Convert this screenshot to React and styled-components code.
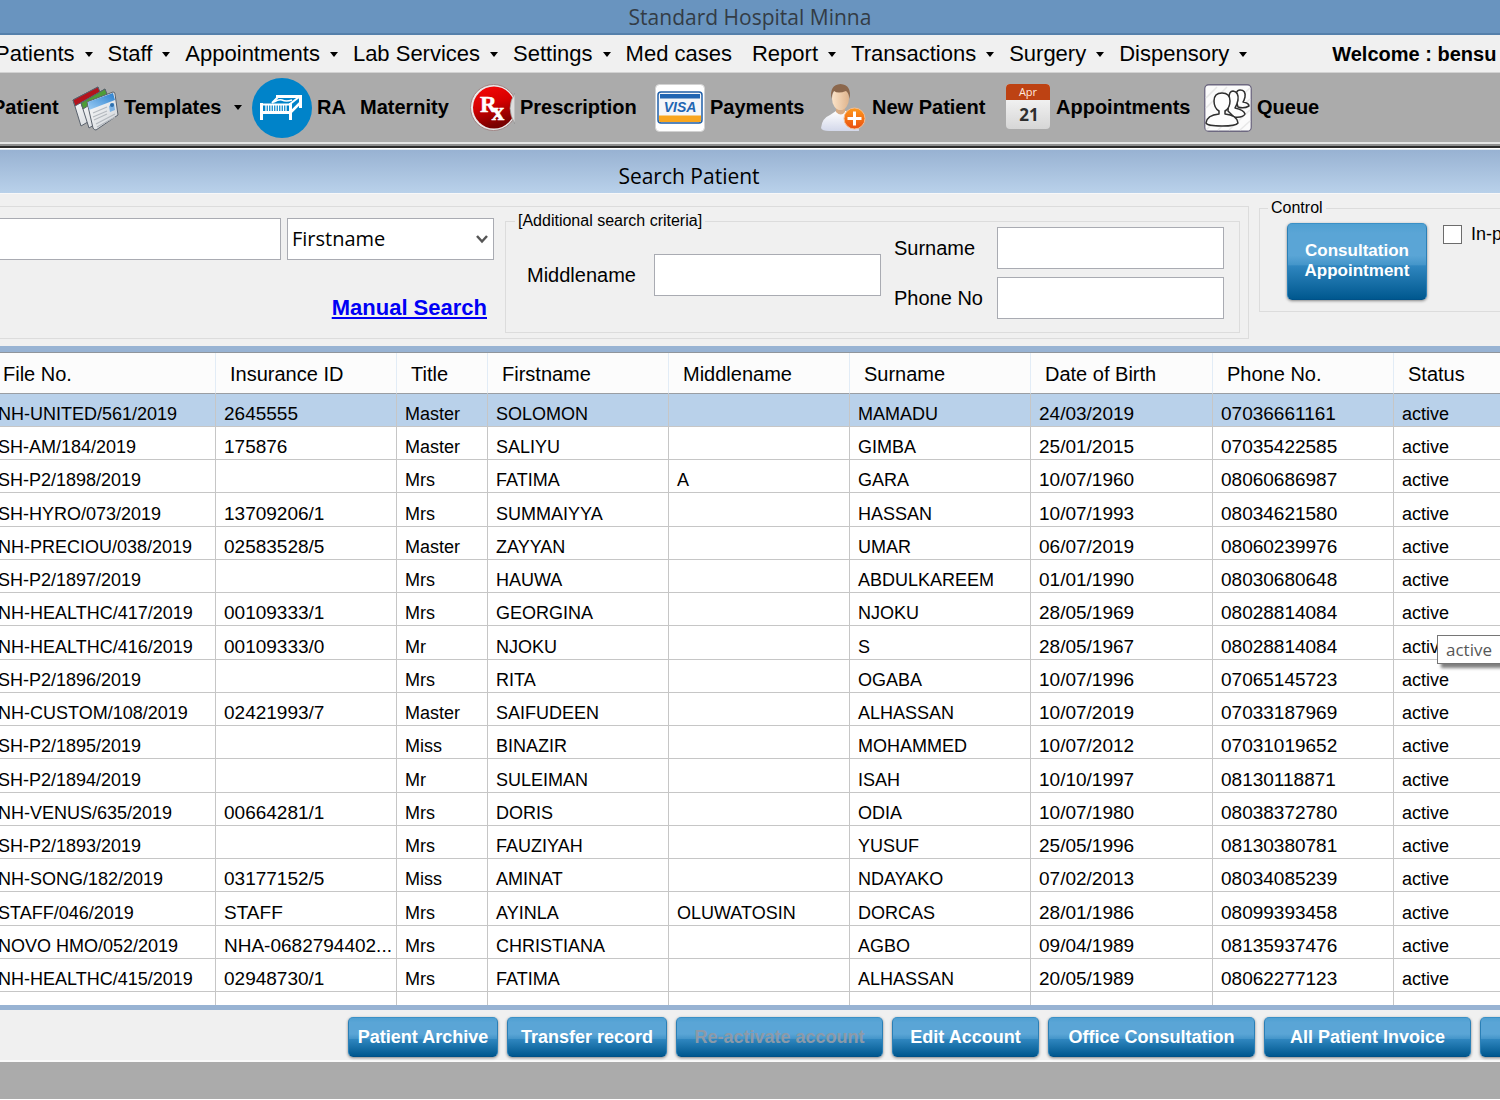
import React from "react";
import styled, { createGlobalStyle, css } from "styled-components";

const GlobalStyle = createGlobalStyle`
  *, *::before, *::after { box-sizing: border-box; }
  body {
    margin: 0;
    overflow: hidden;
    background: #fff;
    color: #000;
    font-family: "Liberation Sans", Arial, sans-serif;
    font-size: 20px;
  }
  button, input, select { font: inherit; color: inherit; margin: 0; }
`;

const humanist = `"Open Sans", "Noto Sans", sans-serif`;

const Window = styled.div`
  display: flex;
  flex-direction: column;
  overflow: hidden;
  white-space: nowrap;
`;

const TitleBar = styled.header`
  height: 35px;
  border-bottom: 2px solid #5580ab;
  background: #6994bf;
  color: #333c46;
  font: 21px/34px ${humanist};
  text-align: center;
`;

const MenuBar = styled.nav`
  display: flex;
  align-items: center;
  gap: 15px;
  height: 38px;
  margin-left: -5px;
  background: #f0f0f0;
  border-bottom: 1px solid #d2d2d2;
`;

const MenuButton = styled.button`
  display: flex;
  align-items: center;
  gap: 10px;
  flex: none;
  border: 0;
  padding: 1px ${(p) => (p.$plain ? 5 : 0)}px 0 0;
  background: none;
  font-size: 22px;
  line-height: 36px;
`;

const Caret = styled.span`
  flex: none;
  border: 4px solid transparent;
  border-top: 5px solid #000;
  border-bottom: 0;
`;

const Welcome = styled.span`
  margin-left: 70px;
  padding-top: 2px;
  font-weight: bold;
  font-size: 20px;
`;

const ToolBar = styled.div`
  display: flex;
  align-items: center;
  height: 69px;
  margin-left: -8px;
  background: #ababab;
`;

const ToolButton = styled.button`
  display: flex;
  align-items: center;
  gap: 5px;
  flex: none;
  width: ${(p) => p.$width}px;
  border: 0;
  padding: 0;
  background: none;
  font-weight: bold;
  font-size: 20px;
  line-height: 24px;

  svg { flex: none; }
  ${Caret} { margin-left: 8px; }
`;

const ToolText = styled.span`
  padding-bottom: 2px;
`;

const Groove = styled.div`
  height: 8px;
  background: linear-gradient(
    #e4e4e4 0 2px, #8e8e8e 2px 4px, #2c2c2c 4px 6px, #fff 6px 7px, #dfe8f2 7px
  );
`;

const PanelTitle = styled.h1`
  margin: 0;
  height: 44px;
  padding: 2px 122px 0 0;
  border-bottom: 1px solid #f8f8f8;
  background: linear-gradient(#98b2d2, #b9d1ea);
  font: 21px/48px ${humanist};
  text-align: center;
`;

const SearchPanel = styled.form`
  display: flex;
  align-items: flex-start;
  gap: 10px;
  margin-left: -10px;
  padding: 8px 0 7px;
  background: #f0f0f0;
`;

const SearchGroup = styled.div`
  display: flex;
  gap: 11px;
  flex: none;
  margin-top: 4px;
  padding: 8px 8px 5px 0;
  border: 1px solid #dcdcdc;
`;

const QuickSearch = styled.div`
  display: grid;
  grid-template-columns: 290px 207px;
  gap: 35px 6px;
  align-content: start;
  padding-top: 3px;
`;

const boxed = css`
  width: 100%;
  height: 42px;
  border: 1px solid #a9abb2;
  border-radius: 0;
  background: #fff;
  outline: 0;
`;

const TextBox = styled.input`
  ${boxed}
  padding: 0 6px;
`;

const SelectWrap = styled.div`
  display: grid;
  align-items: center;

  > * { grid-area: 1 / 1; }
  svg { justify-self: end; margin-right: 6px; pointer-events: none; }
`;

const Select = styled.select`
  ${boxed}
  appearance: none;
  padding: 0 4px 1px;
  font: 20px ${humanist};
`;

const ManualLink = styled.a`
  grid-column: 2;
  justify-self: end;
  padding-right: 7px;
  color: #0000f5;
  font-weight: bold;
  font-size: 22px;
  line-height: 26px;
`;

const Group = styled.fieldset`
  display: flex;
  flex: ${(p) => (p.$grow ? "1 0 300px" : "none")};
  align-items: ${(p) => (p.$grow ? "flex-start" : "center")};
  min-width: 0;
  margin: 0;
  padding: ${(p) => (p.$grow ? "9px 0 11px 27px" : "0 15px 13px 21px")};
  border: 1px solid #dcdcdc;
`;

const Legend = styled.legend`
  margin-left: ${(p) => (p.$wide ? -12 : -19)}px;
  padding: 0 3px;
  font-size: 16px;
  line-height: 12px;
`;

const Fields = styled.div`
  display: grid;
  grid-template-columns: ${(p) => p.$label}px 227px;
  align-items: center;
  gap: 8px 0;
  margin-right: ${(p) => (p.$spaced ? 13 : 0)}px;
  padding-top: ${(p) => (p.$spaced ? 4 : 0)}px;
`;

const GlossyButton = styled.button`
  flex: none;
  width: ${(p) => p.$width}px;
  height: ${(p) => (p.$tall ? 77 : 40)}px;
  padding: ${(p) => (p.$tall ? "0 10px 2px" : "0 0 1px")};
  border: 1px solid;
  border-color: #3a90c6 #2a7fb6 #005188;
  border-radius: 5px;
  background: linear-gradient(#4fa0d2, #5aa5d6 12% 42%, #4596ca 54%, #2f86bf 56%, #00588f);
  box-shadow: 0 1px 3px rgba(0, 0, 0, 0.45);
  color: #fff;
  font-weight: bold;
  font-size: ${(p) => (p.$tall ? 17 : 18)}px;
  line-height: 20px;
  white-space: ${(p) => (p.$tall ? "normal" : "nowrap")};

  &:disabled { color: #8d9aa8; }
`;

const CheckLabel = styled.label`
  display: flex;
  align-items: center;
  gap: 9px;
  margin-left: 16px;
  font-size: 18px;
  line-height: 22px;
`;

const CheckBox = styled.input`
  appearance: none;
  flex: none;
  width: 19px;
  height: 19px;
  border: 1px solid #6c6c6c;
  background: #fff;
`;

const GridFrame = styled.main`
  height: 664px;
  overflow: hidden;
  border: solid #98b3d3;
  border-width: 6px 0 5px;
`;

const Table = styled.table`
  width: calc(100% + 84px);
  margin-left: -10px;
  border-collapse: separate;
  border-spacing: 0;
  border-top: 1px solid #8f959c;
  table-layout: fixed;
`;

const HeadCell = styled.th`
  height: 41px;
  padding: 1px 0 0 14px;
  border-right: 1px solid #e2ecf6;
  border-bottom: 1px solid #9a9ea3;
  background: #fcfcfc;
  font-weight: normal;
  font-size: 20px;
  line-height: 24px;
  text-align: left;

  &:first-child { padding-left: 13px; }
`;

const Row = styled.tr`
  height: 33px;
  background: ${(p) => (p.$selected ? "#b9d1ea" : "#fff")};

  &:nth-child(4n) { height: 34px; }
`;

const Cell = styled.td`
  position: relative;
  padding: 8px 0 0 8px;
  border-right: 1px solid #c6c6c6;
  border-bottom: 1px solid #c6c6c6;
  font-size: ${(p) => (p.$numeric ? 19 : 18)}px;
  line-height: 22px;
`;

const Tooltip = styled.span`
  position: absolute;
  z-index: 1;
  top: 9px;
  left: 43px;
  width: 80px;
  padding-left: 8px;
  border: 1px solid #767676;
  background: #fff;
  box-shadow: 4px 4px 3px rgba(0, 0, 0, 0.5);
  color: #575757;
  font: 17px/27px ${humanist};
`;

const ActionBar = styled.footer`
  display: flex;
  align-items: center;
  gap: 9px;
  height: 52px;
  padding: 4px 0 0 348px;
  border-bottom: 2px solid #fafafa;
  background: #f0f0f0;
`;

const Desktop = styled.div`
  height: 37px;
  background: #ababab;
`;

const TemplatesIcon = () => (
  <svg width="47" height="46" viewBox="0 0 47 46" aria-hidden="true">
    <defs>
      <linearGradient id="paper" x1="0" y1="0" x2="1" y2="1">
        <stop offset="0" stopColor="#fff" />
        <stop offset="1" stopColor="#cfd3d8" />
      </linearGradient>
      <linearGradient id="blueHead" x1="0" y1="1" x2="1" y2="0">
        <stop offset="0" stopColor="#9ccdf4" />
        <stop offset="1" stopColor="#2a7fce" />
      </linearGradient>
    </defs>
    <g stroke="#59616c" strokeWidth="1" strokeLinejoin="round">
      <path d="M1 15 26 2 31 28 9 41Z" fill="url(#paper)" />
      <path d="M1 15 26 2 28 7 3 21Z" fill="#b3141d" />
      <path d="M9 18 33 4 38 30 17 43Z" fill="url(#paper)" />
      <path d="M9 18 33 4 35 9 11 24Z" fill="#4e9d36" />
      <path d="M15 17 41 7Q43 7 43 9L46 30 24 45Q22 45 21 43Z" fill="url(#paper)" />
    </g>
    <path d="M16 17 41 8 43 15 17 25Z" fill="url(#blueHead)" />
    <path d="M21 28 35 22M21 32 35 26M22 35 35 29M24 39 43 29M25 42 43 32" stroke="#b4b9bf" strokeWidth="1.2" />
    <path d="M37 21 42 18 43 25 38 27Z" fill="#7eb3e4" />
    <circle cx="40" cy="20" r="2" fill="#2c6fae" />
  </svg>
);

const BedIcon = () => (
  <svg width="60" height="60" viewBox="0 0 60 60" aria-hidden="true">
    <circle cx="30" cy="30" r="30" fill="#0083c9" />
    <g fill="none" stroke="#fff">
      <path d="M9.500 25V42M38.500 25V42M9 34.500H39" strokeWidth="3" />
      <path d="M9 26.500H39" strokeWidth="2" />
      <path d="M14 27V33M16.500 27V33M19 27V33M21.500 27V33M24 27V33M26.500 27V33M29 27V33M31.500 27V33M34 27V33" strokeWidth="1.300" />
      <path d="M24 18.500H48.500V30" strokeWidth="3" />
      <path d="M20 25 26 19M38 26 47 19" strokeWidth="2" />
      <path d="M39 34 49 24" strokeWidth="2.500" />
      <path d="M22 24Q27 21 30 22 34 24 40 22" strokeWidth="1.500" />
    </g>
  </svg>
);

const RxIcon = () => (
  <svg width="45" height="48" viewBox="0 0 45 48" aria-hidden="true">
    <defs>
      <linearGradient id="rxRed" x1="0" y1="0" x2="0.3" y2="1">
        <stop offset="0" stopColor="#f80808" />
        <stop offset="0.5" stopColor="#d60000" />
        <stop offset="1" stopColor="#780000" />
      </linearGradient>
    </defs>
    <circle cx="23.500" cy="23.500" r="23" fill="#e9e9e9" stroke="#a08585" />
    <circle cx="24" cy="23.500" r="21" fill="url(#rxRed)" />
    <path d="M45 9Q35 24 45 40Z" fill="#dedede" stroke="#8d8d8d" strokeWidth="0.700" />
    <text x="10" y="28" fill="#fff" stroke="#fff" strokeWidth="0.500" fontFamily="Liberation Serif, serif" fontSize="23">
      R<tspan dx="-5" dy="8" fontSize="25">x</tspan>
    </text>
  </svg>
);

const VisaIcon = () => (
  <svg width="50" height="48" viewBox="0 0 50 48" aria-hidden="true">
    <rect x="0.500" y="0.500" width="49" height="47" rx="4" fill="#fff" stroke="#d2d2d2" />
    <rect x="3" y="8" width="44" height="31" rx="3" fill="#f4f6f9" stroke="#1f5fa8" strokeWidth="1.500" />
    <rect x="5" y="10" width="40" height="4.500" fill="#2165b2" />
    <path d="M4 31.500H46V36.500Q46 38 44.500 38H5.500Q4 38 4 36.500Z" fill="#f9a61f" />
    <text x="25" y="28" textAnchor="middle" fontFamily="Liberation Sans, sans-serif" fontSize="14" fontWeight="bold" fontStyle="italic" fill="#2165b2">VISA</text>
  </svg>
);

const NewPatientIcon = () => (
  <svg width="46" height="48" viewBox="0 0 46 48" aria-hidden="true">
    <defs>
      <linearGradient id="skin" x1="0" y1="0" x2="1" y2="0">
        <stop offset="0" stopColor="#fbe3c8" />
        <stop offset="1" stopColor="#dfb48d" />
      </linearGradient>
      <linearGradient id="shirt" x1="0" y1="0" x2="0" y2="1">
        <stop offset="0" stopColor="#fff" />
        <stop offset="1" stopColor="#d3d8ea" />
      </linearGradient>
      <linearGradient id="badge" x1="0" y1="0" x2="0" y2="1">
        <stop offset="0" stopColor="#ff9a1c" />
        <stop offset="1" stopColor="#e94d10" />
      </linearGradient>
    </defs>
    <path d="M0 44Q1 34 9 31L15 27H25L32 31Q38 35 38 47H8Q1 47 0 44Z" fill="url(#shirt)" />
    <path d="M15 22H24V28Q20 33 15 28Z" fill="#d8ab83" />
    <ellipse cx="19.500" cy="14.500" rx="8.500" ry="11.500" fill="url(#skin)" />
    <path d="M10.500 15Q8 1 19.500 0 31 1 28.500 15 28 9 25 7 17 10 13 7 11 9 10.500 15Z" fill="#8b674c" />
    <circle cx="33.500" cy="34.500" r="10.500" fill="url(#badge)" stroke="#f3bd91" />
    <path d="M33.500 27.500V41.500M26.500 34.500H40.500" stroke="#fff" strokeWidth="3" />
  </svg>
);

const CalendarIcon = () => (
  <svg width="46" height="48" viewBox="0 0 46 48" aria-hidden="true">
    <defs>
      <linearGradient id="sheet" x1="0" y1="0" x2="0" y2="1">
        <stop offset="0" stopColor="#fff" />
        <stop offset="1" stopColor="#d6d6d6" />
      </linearGradient>
    </defs>
    <rect x="1" y="0" width="44" height="45" rx="4" fill="url(#sheet)" />
    <path d="M1 16V4Q1 0 5 0H41Q45 0 45 4V16Z" fill="#bd4213" />
    <g fontFamily="Open Sans, sans-serif" textAnchor="middle">
      <text x="23" y="12" fontSize="11" fontWeight="normal" fill="#ffe9df">Apr</text>
      <text x="24" y="37" fontSize="17" fontWeight="bold" fill="#2e2e2e">21</text>
    </g>
  </svg>
);

const QueueIcon = () => (
  <svg width="48" height="48" viewBox="0 0 48 48" aria-hidden="true">
    <rect x="0.750" y="0.750" width="46.500" height="46.500" rx="4" fill="#fbfbfb" stroke="#6d6880" strokeWidth="1.300" />
    <path d="M2 14 13 3M2 24 23 3M2 46 46 4M14 46 46 15M25 46 46 26M36 46 46 37" stroke="#e8e8e8" strokeWidth="1.500" />
    <g fill="#fdfdfd" stroke="#2f2f2f" strokeWidth="1.500" strokeLinejoin="round">
      <path d="M32 16Q31 6 36 6 42 6 41 13 40 17 39 18 45 19 45 22 40 25 34 23Z" />
      <path d="M25 14Q25 7 29 7 35 8 34 16 33 21 31 24 40 26 41 30 39 34 30 33L24 27Z" />
      <path d="M15 27Q10 24 10 17 10 9 18 9 26 9 26 17 26 24 21 27V30Q33 31 34 39 32 42 18 42 3 42 2 39 3 31 15 30Z" />
    </g>
  </svg>
);

const menus = [
  ["Patients", true], ["Staff", true], ["Appointments", true], ["Lab Services", true],
  ["Settings", true], ["Med cases", false], ["Report", true], ["Transactions", true],
  ["Surgery", true], ["Dispensory", true],
];

const tools = [
  { label: "Patient", width: 80 },
  { label: "Templates", width: 180, Icon: TemplatesIcon, caret: true },
  { label: "RA", width: 108, Icon: BedIcon },
  { label: "Maternity", width: 110 },
  { label: "Prescription", width: 185, Icon: RxIcon },
  { label: "Payments", width: 166, Icon: VisaIcon },
  { label: "New Patient", width: 184, Icon: NewPatientIcon },
  { label: "Appointments", width: 199, Icon: CalendarIcon },
  { label: "Queue", width: 120, Icon: QueueIcon },
];

const columns = [
  ["File No.", 226], ["Insurance ID", 181], ["Title", 91], ["Firstname", 181],
  ["Middlename", 181], ["Surname", 181], ["Date of Birth", 182], ["Phone No.", 181],
  ["Status"],
];

const numericColumns = [1, 6, 7];

const patients = [
  ["NH-UNITED/561/2019", "2645555", "Master", "SOLOMON", "", "MAMADU", "24/03/2019", "07036661161"],
  ["SH-AM/184/2019", "175876", "Master", "SALIYU", "", "GIMBA", "25/01/2015", "07035422585"],
  ["SH-P2/1898/2019", "", "Mrs", "FATIMA", "A", "GARA", "10/07/1960", "08060686987"],
  ["SH-HYRO/073/2019", "13709206/1", "Mrs", "SUMMAIYYA", "", "HASSAN", "10/07/1993", "08034621580"],
  ["NH-PRECIOU/038/2019", "02583528/5", "Master", "ZAYYAN", "", "UMAR", "06/07/2019", "08060239976"],
  ["SH-P2/1897/2019", "", "Mrs", "HAUWA", "", "ABDULKAREEM", "01/01/1990", "08030680648"],
  ["NH-HEALTHC/417/2019", "00109333/1", "Mrs", "GEORGINA", "", "NJOKU", "28/05/1969", "08028814084"],
  ["NH-HEALTHC/416/2019", "00109333/0", "Mr", "NJOKU", "", "S", "28/05/1967", "08028814084"],
  ["SH-P2/1896/2019", "", "Mrs", "RITA", "", "OGABA", "10/07/1996", "07065145723"],
  ["NH-CUSTOM/108/2019", "02421993/7", "Master", "SAIFUDEEN", "", "ALHASSAN", "10/07/2019", "07033187969"],
  ["SH-P2/1895/2019", "", "Miss", "BINAZIR", "", "MOHAMMED", "10/07/2012", "07031019652"],
  ["SH-P2/1894/2019", "", "Mr", "SULEIMAN", "", "ISAH", "10/10/1997", "08130118871"],
  ["NH-VENUS/635/2019", "00664281/1", "Mrs", "DORIS", "", "ODIA", "10/07/1980", "08038372780"],
  ["SH-P2/1893/2019", "", "Mrs", "FAUZIYAH", "", "YUSUF", "25/05/1996", "08130380781"],
  ["NH-SONG/182/2019", "03177152/5", "Miss", "AMINAT", "", "NDAYAKO", "07/02/2013", "08034085239"],
  ["STAFF/046/2019", "STAFF", "Mrs", "AYINLA", "OLUWATOSIN", "DORCAS", "28/01/1986", "08099393458"],
  ["NOVO HMO/052/2019", "NHA-0682794402...", "Mrs", "CHRISTIANA", "", "AGBO", "09/04/1989", "08135937476"],
  ["NH-HEALTHC/415/2019", "02948730/1", "Mrs", "FATIMA", "", "ALHASSAN", "20/05/1989", "08062277123"],
];

const actions = [
  { label: "Patient Archive", width: 150 },
  { label: "Transfer record", width: 160 },
  { label: "Re-activate account", width: 207, disabled: true },
  { label: "Edit Account", width: 147 },
  { label: "Office Consultation", width: 207 },
  { label: "All Patient Invoice", width: 207 },
  { label: "", width: 150 },
];

export default function App() {
  return (
    <Window>
      <GlobalStyle />
      <TitleBar>Standard Hospital Minna</TitleBar>
      <MenuBar>
        {menus.map(([label, opens]) => (
          <MenuButton key={label} type="button" $plain={!opens}>
            {label}
            {opens && <Caret />}
          </MenuButton>
        ))}
        <Welcome>Welcome : bensu</Welcome>
      </MenuBar>
      <ToolBar>
        {tools.map(({ label, width, Icon, caret }) => (
          <ToolButton key={label} type="button" $width={width}>
            {Icon && <Icon />}
            <ToolText>{label}</ToolText>
            {caret && <Caret />}
          </ToolButton>
        ))}
      </ToolBar>
      <Groove />
      <PanelTitle>Search Patient</PanelTitle>

      <SearchPanel onSubmit={(e) => e.preventDefault()}>
        <SearchGroup>
          <QuickSearch>
            <TextBox aria-label="Search" />
            <SelectWrap>
              <Select aria-label="Search by" defaultValue="Firstname">
                <option>Firstname</option>
              </Select>
              <svg width="12" height="10" viewBox="0 0 12 10" aria-hidden="true">
                <path d="M1 2 6 7.500 11 2" fill="none" stroke="#555" strokeWidth="2.500" />
              </svg>
            </SelectWrap>
            <ManualLink href="#manual">Manual Search</ManualLink>
          </QuickSearch>
          <Group>
            <Legend $wide>[Additional search criteria]</Legend>
            <Fields $label={127} $spaced>
              <label htmlFor="middlename">Middlename</label>
              <TextBox id="middlename" />
            </Fields>
            <Fields $label={103}>
              <label htmlFor="surname">Surname</label>
              <TextBox id="surname" />
              <label htmlFor="phone">Phone No</label>
              <TextBox id="phone" />
            </Fields>
          </Group>
        </SearchGroup>
        <Group $grow>
          <Legend>Control</Legend>
          <GlossyButton type="button" $width={140} $tall>Consultation Appointment</GlossyButton>
          <CheckLabel>
            <CheckBox type="checkbox" />
            In-patient
          </CheckLabel>
        </Group>
      </SearchPanel>

      <GridFrame>
        <Table>
          <colgroup>
            {columns.map(([name, width]) => <col key={name} width={width} />)}
          </colgroup>
          <thead>
            <tr>{columns.map(([name]) => <HeadCell key={name} scope="col">{name}</HeadCell>)}</tr>
          </thead>
          <tbody>
            {patients.map((patient, r) => (
              <Row key={patient[0]} $selected={r === 0}>
                {patient.map((value, c) => (
                  <Cell key={c} $numeric={numericColumns.includes(c)}>{value}</Cell>
                ))}
                <Cell>
                  active
                  {r === 7 && <Tooltip role="tooltip">active</Tooltip>}
                </Cell>
              </Row>
            ))}
            <Row>{columns.map(([name]) => <Cell key={name} />)}</Row>
          </tbody>
        </Table>
      </GridFrame>

      <ActionBar>
        {actions.map(({ label, width, disabled }) => (
          <GlossyButton key={label} type="button" $width={width} disabled={disabled} aria-label={label || "More"}>
            {label}
          </GlossyButton>
        ))}
      </ActionBar>
      <Desktop />
    </Window>
  );
}
